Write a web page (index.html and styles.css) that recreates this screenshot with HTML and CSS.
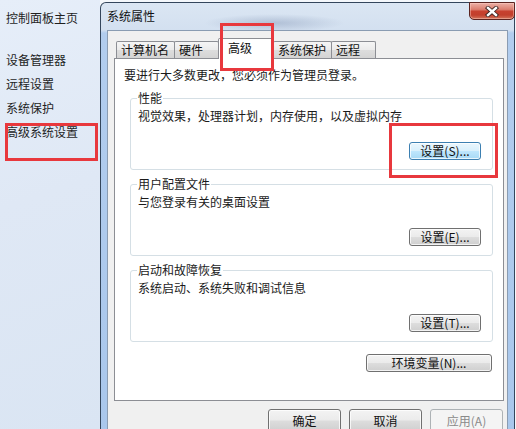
FILE: index.html
```html
<!DOCTYPE html>
<html lang="zh-CN">
<head>
<meta charset="utf-8">
<title>系统属性</title>
<link rel="stylesheet" href="styles.css">
</head>
<body>
<div class="screen">
  <nav class="sidebar">
    <div class="side-home">控制面板主页</div>
    <ul class="side-links">
      <li>设备管理器</li>
      <li>远程设置</li>
      <li>系统保护</li>
      <li>高级系统设置</li>
    </ul>
  </nav>
  <div class="window">
    <div class="titlebar">
      <span class="title">系统属性</span>
      <div class="close">
        <svg width="14" height="11" viewBox="0 0 14 11">
          <path d="M3 2 L11 9 M11 2 L3 9" stroke="#3a2420" stroke-width="4.2" stroke-linecap="square" fill="none"/>
          <path d="M3 2 L11 9 M11 2 L3 9" stroke="#ffffff" stroke-width="2.4" stroke-linecap="square" fill="none"/>
        </svg>
      </div>
    </div>
    <div class="client">
      <div class="tabs">
        <div class="tab">计算机名</div>
        <div class="tab">硬件</div>
        <div class="tab tab-active">高级</div>
        <div class="tab">系统保护</div>
        <div class="tab">远程</div>
      </div>
      <div class="panel">
        <p class="intro">要进行大多数更改，您必须作为管理员登录。</p>
        <fieldset class="group">
          <legend>性能</legend>
          <p class="desc">视觉效果，处理器计划，内存使用，以及虚拟内存</p>
          <div class="group-actions"><button class="btn btn-set btn-hot">设置(S)...</button></div>
        </fieldset>
        <fieldset class="group">
          <legend>用户配置文件</legend>
          <p class="desc">与您登录有关的桌面设置</p>
          <div class="group-actions"><button class="btn btn-set">设置(E)...</button></div>
        </fieldset>
        <fieldset class="group">
          <legend>启动和故障恢复</legend>
          <p class="desc">系统启动、系统失败和调试信息</p>
          <div class="group-actions"><button class="btn btn-set">设置(T)...</button></div>
        </fieldset>
        <div class="env-row"><button class="btn btn-env">环境变量(N)...</button></div>
      </div>
      <div class="dialog-buttons">
        <button class="btn btn-dlg">确定</button>
        <button class="btn btn-dlg">取消</button>
        <button class="btn btn-dlg" disabled>应用(A)</button>
      </div>
    </div>
  </div>
  <div class="mark mark-side"></div>
  <div class="mark mark-tab"></div>
  <div class="mark mark-btn"></div>
</div>
</body>
</html>
```
FILE: styles.css
```css
* { box-sizing: border-box; }
html, body { margin: 0; padding: 0; }
body {
  font-family: "Noto Sans CJK SC", "Noto Sans", sans-serif;
  font-size: 12px;
  color: #1a1a1a;
  background: #ffffff;
}
.screen {
  position: relative;
  width: 516px;
  height: 429px;
  overflow: hidden;
  display: flex;
  align-items: flex-start;
  background: #f4f7fb;
}

/* sidebar */
.sidebar {
  width: 100px;
  height: 429px;
  flex: none;
  padding-top: 10px;
  background: linear-gradient(160deg, #e6eef9 0%, #dfe8f5 45%, #dae5f3 100%);
  color: #1f1f1f;
}
.side-home {
  padding-left: 6px;
  line-height: 16px;
  white-space: nowrap;
}
.side-links {
  list-style: none;
  margin: 22px 0 0;
  padding: 0 0 0 6px;
}
.side-links li {
  line-height: 24px;
  white-space: nowrap;
}

/* window */
.window {
  width: 415px;
  height: 440px;
  flex: none;
  margin-top: 2px;
  border: 1px solid #34465c;
  border-bottom: none;
  border-radius: 6px 6px 0 0;
  padding: 0 6px;
  display: flex;
  flex-direction: column;
  background:
    radial-gradient(ellipse 70px 9px at 42% 20px, rgba(110,130,165,0.35), rgba(110,130,165,0) 100%),
    linear-gradient(180deg, #dbe6f3 0px, #d3e0f0 27px, #b2cdee 30px, #a9c7ec 100%);
}
.titlebar {
  height: 27px;
  flex: none;
  display: flex;
  justify-content: space-between;
  align-items: flex-start;
}
.title {
  margin-top: 5px;
  line-height: 16px;
  color: #111;
  font-size: 12px;
}
.close {
  width: 46px;
  height: 18px;
  margin-top: -1px;
  margin-right: -7px;
  border: 1px solid #5b2420;
  border-radius: 0 0 5px 5px;
  background: linear-gradient(180deg, #ecb0a6 0%, #db7f70 40%, #c7412f 52%, #c23f2c 75%, #d2745a 100%);
  box-shadow: inset 0 0 0 1px rgba(255,210,200,0.45);
  display: flex;
  align-items: center;
  justify-content: center;
}
.close svg { display: block; }

.client {
  flex: 1;
  background: #f0f0f0;
  border: 1px solid #8a9cb2;
  border-bottom: none;
  padding: 7px 3px 0 6px;
  display: flex;
  flex-direction: column;
}

/* tabs */
.tabs {
  display: flex;
  align-items: flex-start;
  height: 21px;
  margin-bottom: -1px;
  margin-left: 2px;
  position: relative;
  z-index: 1;
}
.tab {
  min-width: 45px;
  height: 17px;
  margin-top: 3px;
  padding: 0 5px 0 4px;
  line-height: 15px;
  border: 1px solid #8c8e94;
  border-bottom: none;
  border-radius: 2px 2px 0 0;
  background: linear-gradient(180deg, #f5f5f5 0%, #ebebeb 50%, #dddddd 51%, #d4d4d4 100%);
  white-space: nowrap;
  color: #111;
}
.tab + .tab { margin-left: -1px; }
.tab-active {
  min-width: 56px;
  height: 21px;
  margin-top: 0;
  padding-left: 9px;
  padding-top: 1px;
  line-height: 16px;
  background: #ffffff;
  position: relative;
  z-index: 2;
}

/* panel */
.panel {
  width: 390px;
  height: 343px;
  flex: none;
  border: 1px solid #8c8e94;
  background: #ffffff;
  padding: 8px 10px 0 9px;
  display: flex;
  flex-direction: column;
}
.intro {
  margin: 0;
  line-height: 16px;
  white-space: nowrap;
}
.group {
  margin: 8px 0 0 6px;
  padding: 3px 11px 9px 7px;
  border: 1px solid #d5dfe5;
  border-radius: 3px;
  min-width: 0;
}
.group + .group { margin-top: 7px; }
.group legend {
  padding: 0 1px;
  margin-left: -1px;
  line-height: 14px;
}
.desc {
  margin: 0;
  line-height: 16px;
  white-space: nowrap;
}
.group-actions {
  display: flex;
  justify-content: flex-end;
  margin-top: 18px;
}
.env-row {
  display: flex;
  justify-content: flex-end;
  margin-top: 12px;
  padding-right: 1px;
}

/* buttons */
.btn {
  font-family: "Noto Sans CJK SC", "Noto Sans", sans-serif;
  font-size: 12px;
  color: #111;
  height: 18px;
  line-height: 14px;
  padding: 0;
  border: 1px solid #707070;
  border-radius: 3px;
  background: linear-gradient(180deg, #f3f3f3 0%, #ebebeb 48%, #dddddd 52%, #cfcfcf 100%);
  box-shadow: inset 0 0 0 1px rgba(255,255,255,0.75);
  white-space: nowrap;
}
.btn-set { width: 72px; }
.btn-env { width: 126px; }
.btn-hot {
  border-color: #3c7fb1;
  background: linear-gradient(180deg, #eaf6fd 0%, #d9f0fc 48%, #bee6fd 52%, #a7d9f5 100%);
}
.dialog-buttons {
  display: flex;
  justify-content: flex-end;
  gap: 8px;
  margin-top: 8px;
  padding-right: 1px;
}
.btn-dlg {
  width: 73px;
  height: 23px;
  line-height: 19px;
}
.btn-dlg:disabled {
  color: #8a8a8a;
  border-color: #adb2b5;
  background: #f4f4f4;
  box-shadow: none;
}

/* red annotation boxes */
.mark {
  position: absolute;
  border: 3px solid #e8383d;
  z-index: 5;
}
.mark-side { left: 5px; top: 123px; width: 93px; height: 38px; }
.mark-tab { left: 220px; top: 23px; width: 54px; height: 48px; }
.mark-btn { left: 389px; top: 123px; width: 109px; height: 55px; }
```
